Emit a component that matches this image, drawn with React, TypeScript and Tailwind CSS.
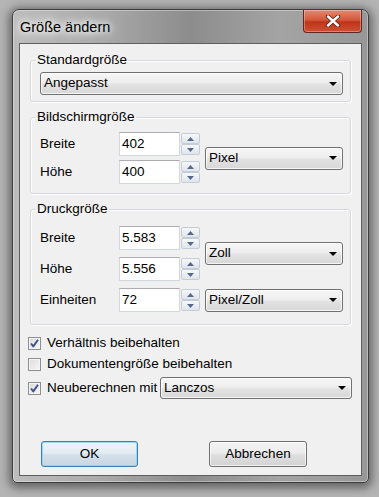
import React from 'react';

const FONT = "font-['Liberation_Sans',Arial,sans-serif] text-[13.5px] text-black";

function Combo({ label, className }: { label: string; className: string }) {
  return (
    <div
      className={`flex items-center justify-between rounded-[3px] border border-[#707070] bg-[linear-gradient(180deg,#f6f6f6_0%,#eeeeee_45%,#e2e2e2_55%,#d7d7d7_100%)] pl-[3px] pr-[5px] shadow-[inset_0_0_0_1px_rgba(255,255,255,0.75)] ${className}`}
    >
      <span>{label}</span>
      <svg width="8" height="4" viewBox="0 0 8 4" aria-hidden="true">
        <path d="M0 0h8L4 4z" fill="#000" />
      </svg>
    </div>
  );
}

function SpinBtn({ up }: { up?: boolean }) {
  return (
    <div className="flex flex-1 items-center justify-center rounded-[2px] border border-[#c4cdd7] bg-[linear-gradient(180deg,#f6f8fa,#dfe5ec)]">
      <svg width="7" height="4" viewBox="0 0 7 4" aria-hidden="true">
        <path d={up ? 'M0 4h7L3.5 0z' : 'M0 0h7L3.5 4z'} fill="#55698f" />
      </svg>
    </div>
  );
}

function Spinner() {
  return (
    <div className="flex h-[22px] w-[19px] flex-col">
      <SpinBtn up />
      <SpinBtn />
    </div>
  );
}

function NumField({ value }: { value: string }) {
  return (
    <div className="flex items-center">
      <div className="flex h-[24px] w-[61px] items-center border border-[#d3d8de] border-t-[#abadb3] bg-white pl-[2px]">
        {value}
      </div>
      <div className="ml-[1px]">
        <Spinner />
      </div>
    </div>
  );
}

function Check({ checked, children }: { checked?: boolean; children: React.ReactNode }) {
  return (
    <div className="flex items-center gap-[6px]">
      <div className="flex h-[13px] w-[13px] items-center justify-center border border-[#8e8f8f] bg-[linear-gradient(135deg,#dcdcdc,#f6f6f6)] shadow-[inset_0_0_0_1px_#f4f4f4]">
        {checked && (
          <svg width="11" height="11" viewBox="0 0 11 11" aria-hidden="true">
            <path d="M2 5.5 L4.3 8.4 L9 1.8" fill="none" stroke="#3e5286" strokeWidth="1.9" strokeLinejoin="round" />
          </svg>
        )}
      </div>
      <span>{children}</span>
    </div>
  );
}

export default function App() {
  return (
    <div className={`h-[497px] w-[379px] overflow-hidden bg-[#b4b4b4] pl-[12px] pt-[9px] ${FONT}`}>
      <div className="flex h-[474px] w-[357px] flex-col rounded-t-[7px] rounded-b-[5px] border border-[#3d3d3d] bg-[linear-gradient(90deg,#bdbdbd_0%,#aaaaaa_25%,#8c8c8c_50%,#a4a4a4_75%,#979797_100%)] px-[6px] pb-[6px] shadow-[0_2px_10px_3px_rgba(0,0,0,0.45),inset_0_0_0_1px_rgba(255,255,255,0.35)]">
        {/* title bar */}
        <div className="flex h-[33px] shrink-0 items-start justify-between">
          <span className="ml-[1px] mt-[9px] text-[14.5px] leading-[16px] [text-shadow:0_0_6px_#fff,0_0_10px_#fff,0_0_14px_rgba(255,255,255,0.9)]">
            Größe ändern
          </span>
          <div className="flex h-[23px] w-[59px] items-center justify-center rounded-b-[4px] border border-t-0 border-[#5a2a22] bg-[linear-gradient(180deg,#e38a73_0%,#d4583c_45%,#bd3519_55%,#d14f33_100%)] shadow-[inset_0_0_0_1px_rgba(255,255,255,0.3)]">
            <svg width="16" height="12" viewBox="0 0 16 12" aria-hidden="true">
              <path d="M3 1.5 L13 10.5 M13 1.5 L3 10.5" stroke="#5b2418" strokeWidth="4.2" strokeLinecap="round" />
              <path d="M3 1.5 L13 10.5 M13 1.5 L3 10.5" stroke="#fff" strokeWidth="2.4" strokeLinecap="round" />
            </svg>
          </div>
        </div>

        {/* client area */}
        <div className="flex flex-1 flex-col border border-[#5f5f5f] bg-[#f0f0f0]">
          <fieldset className="mx-[10px] mt-[8px] rounded-[3px] border border-[#d5d9dd] pb-[6px] pt-[4px] shadow-[inset_1px_1px_0_#fff,1px_1px_0_#fff]">
            <legend className="ml-[5px] px-[1px] leading-[16px]">Standardgröße</legend>
            <div className="pl-[9px] pr-[7px]">
              <Combo label="Angepasst" className="h-[23px] w-full" />
            </div>
          </fieldset>

          <fieldset className="mx-[10px] mt-[7px] rounded-[3px] border border-[#d5d9dd] pb-[9px] pt-[7px] shadow-[inset_1px_1px_0_#fff,1px_1px_0_#fff]">
            <legend className="ml-[5px] px-[1px] leading-[16px]">Bildschirmgröße</legend>
            <div className="grid grid-cols-[79px_86px_138px] items-center gap-y-[4px] pl-[9px]">
              <span>Breite</span>
              <NumField value="402" />
              <Combo label="Pixel" className="row-span-2 h-[23px]" />
              <span>Höhe</span>
              <NumField value="400" />
            </div>
          </fieldset>

          <fieldset className="mx-[10px] mt-[7px] rounded-[3px] border border-[#d5d9dd] pb-[12px] pt-[9px] shadow-[inset_1px_1px_0_#fff,1px_1px_0_#fff]">
            <legend className="ml-[5px] px-[1px] leading-[16px]">Druckgröße</legend>
            <div className="grid grid-cols-[79px_86px_138px] items-center gap-y-[7px] pl-[9px]">
              <span>Breite</span>
              <NumField value="5.583" />
              <Combo label="Zoll" className="row-span-2 h-[23px]" />
              <span>Höhe</span>
              <NumField value="5.556" />
              <span>Einheiten</span>
              <NumField value="72" />
              <Combo label="Pixel/Zoll" className="h-[23px]" />
            </div>
          </fieldset>

          <div className="mt-[8px] flex flex-col pl-[8px] pr-[9px]">
            <div className="flex h-[21px] items-center">
              <Check checked>Verhältnis beibehalten</Check>
            </div>
            <div className="flex h-[21px] items-center">
              <Check>Dokumentengröße beibehalten</Check>
            </div>
            <div className="mt-[2px] flex h-[22px] items-center">
              <Check checked>Neuberechnen mit</Check>
              <Combo label="Lanczos" className="ml-auto h-[22px] w-[192px]" />
            </div>
          </div>

          <div className="mt-auto flex gap-[71px] pb-[8px] pl-[21px]">
            <button
              type="button"
              className="h-[26px] w-[97px] rounded-[3px] border border-[#3c7fb1] bg-[linear-gradient(180deg,#eef4f8_0%,#e3ecf3_45%,#d3e0ea_55%,#c9d6e1_100%)] shadow-[inset_0_0_0_1px_rgba(140,210,240,0.8)]"
            >
              OK
            </button>
            <button
              type="button"
              className="h-[26px] w-[98px] rounded-[3px] border border-[#707070] bg-[linear-gradient(180deg,#f4f4f4_0%,#ececec_45%,#dedede_55%,#d3d3d3_100%)] shadow-[inset_0_0_0_1px_rgba(255,255,255,0.7)]"
            >
              Abbrechen
            </button>
          </div>
        </div>
      </div>
    </div>
  );
}
